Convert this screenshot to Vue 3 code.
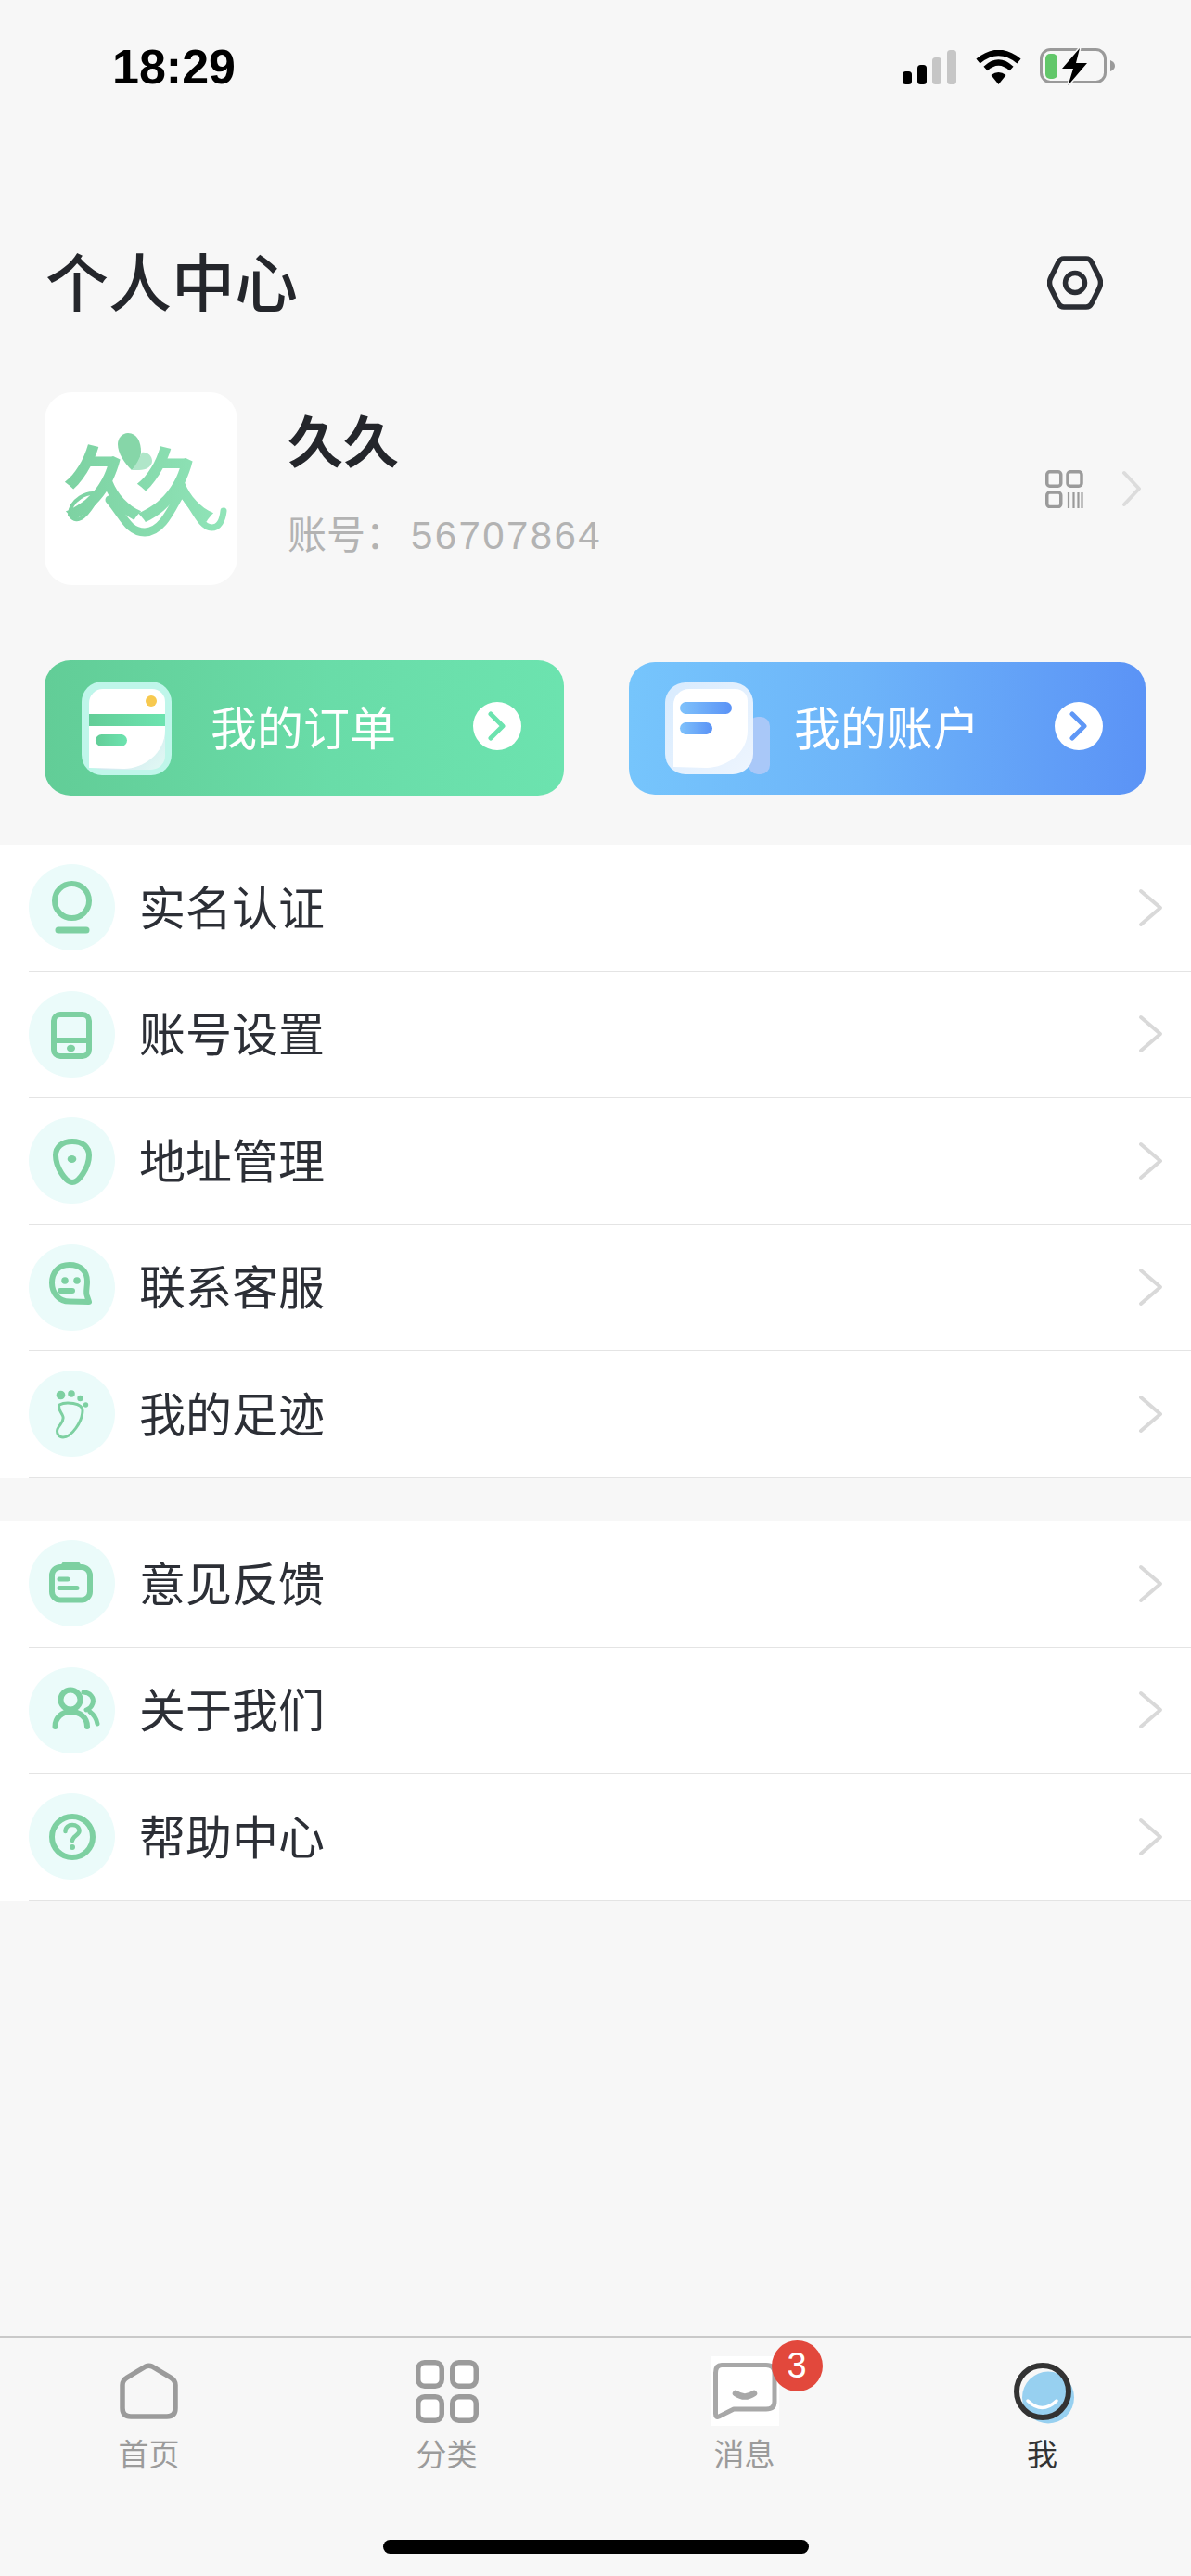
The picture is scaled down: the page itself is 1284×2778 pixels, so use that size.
<template>
  <div class="page">
    <!-- status bar -->
    <div class="status">
      <span class="time">18:29</span>
      <div class="status-icons">
        <svg width="59" height="37" viewBox="0 0 59 37">
          <rect x="0" y="23" width="10" height="14" rx="3.5" fill="#000" />
          <rect x="16" y="16" width="10" height="21" rx="3.5" fill="#000" />
          <rect x="32" y="8" width="10" height="29" rx="3.5" fill="#c6c6c6" />
          <rect x="48" y="0" width="10" height="37" rx="3.5" fill="#c6c6c6" />
        </svg>
        <svg width="51" height="37" viewBox="0 0 51 37">
          <path d="M3.5 12Q25.5 -6 47.5 12" fill="none" stroke="#000" stroke-width="6.5" />
          <path d="M11.5 20Q25.5 7 39.5 20" fill="none" stroke="#000" stroke-width="6" />
          <path d="M17.5 27Q25.5 21 33.5 27L25.5 37Z" fill="#000" />
        </svg>
        <svg width="81" height="41" viewBox="0 0 81 41">
          <rect x="1.5" y="1.5" width="69" height="35" rx="10" fill="none" stroke="#9a9a9a" stroke-width="3" />
          <rect x="6" y="6" width="13" height="27" rx="5" fill="#62c76a" />
          <path d="M76 13Q81 15 81 19Q81 23 76 25Z" fill="#9a9a9a" />
          <path d="M43 0L24 22H36L30.5 40L51 16H39Z" fill="#000" stroke="#f7f7f7" stroke-width="3" paint-order="stroke" />
        </svg>
      </div>
    </div>

    <div class="header">
      <h1 class="title">个人中心</h1>
      <svg class="settings" width="60" height="58" viewBox="0 0 60 58" fill="none" stroke="#2a2d33" stroke-width="5.5">
        <path d="M18 3H42Q46 3 48 7L56 23Q59 29 56 35L48 51Q46 55 42 55H18Q14 55 12 51L4 35Q1 29 4 23L12 7Q14 3 18 3Z" />
        <circle cx="30" cy="29" r="10.5" />
      </svg>
    </div>

    <div class="profile">
      <div class="avatar">
        <svg width="208" height="208" viewBox="0 0 208 208">
          <defs>
            <linearGradient id="logoGrad" gradientUnits="userSpaceOnUse" x1="25" y1="0" x2="193" y2="0">
              <stop offset="0" stop-color="#7dd2a2" />
              <stop offset="1" stop-color="#90e4b8" />
            </linearGradient>
          </defs>
          <text x="20" y="130" class="logo-text" fill="url(#logoGrad)">久</text>
          <text x="98" y="132" class="logo-text" fill="url(#logoGrad)">久</text>
          <path d="M70 116C84 132 90 151 108 151C126 151 136 128 146 110" fill="none" stroke="url(#logoGrad)" stroke-width="9" stroke-linecap="round" />
          <path d="M58 110C46 106 28 116 27 132C36 146 48 130 58 112" fill="none" stroke="url(#logoGrad)" stroke-width="4" />
          <path d="M150 112C160 122 168 146 180 146C188 146 192 138 193 128" fill="none" stroke="url(#logoGrad)" stroke-width="7" stroke-linecap="round" />
          <path d="M90 44C100 44 104 54 104 64C104 72 99 80 94 84C86 76 79 66 79 56C79 49 84 44 90 44Z" fill="#86d6a8" />
          <path d="M105 65C111 64 116 69 116 74C116 80 110 84 102 84H94C99 78 102 72 105 65Z" fill="#b0e6c9" />
        </svg>
      </div>
      <div class="info">
        <div class="name">久久</div>
        <div class="account"><span>账号：</span><span class="account-no">56707864</span></div>
      </div>
      <div class="profile-right">
        <svg width="41" height="41" viewBox="0 0 41 41" fill="none" stroke="#9b9b9b" stroke-width="3.5">
          <rect x="1.75" y="1.75" width="15" height="15.5" rx="3" />
          <rect x="24" y="1.75" width="15" height="15.5" rx="3" />
          <rect x="1.75" y="24" width="15" height="15.5" rx="3" />
          <path d="M25 24V41M30.5 24V41M35.5 24V41M39.5 24V41" stroke-width="2.2" />
        </svg>
        <svg width="22" height="40" viewBox="0 0 22 40" fill="none" stroke="#dcdcdc" stroke-width="4" stroke-linecap="round" stroke-linejoin="round">
          <path d="M3 3L19 20L3 37" />
        </svg>
      </div>
    </div>

    <div class="cards">
      <div class="card card-green">
        <svg class="card-icon" width="97" height="101" viewBox="0 0 97 101">
          <defs>
            <linearGradient id="curlGreen" x1="0" y1="0" x2="1" y2="1">
              <stop offset="0.5" stop-color="#cde6ee" />
              <stop offset="1" stop-color="#e2f9f4" />
            </linearGradient>
            <linearGradient id="bandGreen" x1="0" y1="0" x2="1" y2="0">
              <stop offset="0" stop-color="#62cd97" />
              <stop offset="1" stop-color="#6ce3af" />
            </linearGradient>
          </defs>
          <rect width="97" height="101" rx="22" fill="#bff6ea" />
          <rect x="8" y="8" width="82" height="87" rx="15" fill="url(#curlGreen)" />
          <path d="M8 23A15 15 0 0 1 23 8H76A14 14 0 0 1 90 22V52C90 78 66 94 46 94L8 93Z" fill="#fff" />
          <rect x="8" y="35" width="82" height="13" fill="url(#bandGreen)" />
          <rect x="15" y="57" width="34" height="13" rx="6.5" fill="url(#bandGreen)" />
          <circle cx="75" cy="21" r="6" fill="#f7c94f" />
        </svg>
        <span class="card-text card-text-green">我的订单</span>
        <span class="card-arrow card-arrow-green">
          <svg width="22" height="32" viewBox="0 0 22 32" fill="none" stroke="#6ce3af" stroke-width="5" stroke-linecap="round" stroke-linejoin="round">
            <path d="M4 3L17 16L4 29" />
          </svg>
        </span>
      </div>

      <div class="card card-blue">
        <svg class="card-icon" width="113" height="99" viewBox="0 0 113 99">
          <defs>
            <linearGradient id="edgeBlue" x1="0" y1="0" x2="1" y2="1">
              <stop offset="0" stop-color="#d8ebfe" />
              <stop offset="1" stop-color="#eef5fe" />
            </linearGradient>
            <linearGradient id="curlBlue" x1="0" y1="0" x2="1" y2="1">
              <stop offset="0.55" stop-color="#d5e4fb" />
              <stop offset="1" stop-color="#f0f6fe" />
            </linearGradient>
            <linearGradient id="barBlue" x1="0" y1="0" x2="1" y2="0">
              <stop offset="0" stop-color="#7fc2fb" />
              <stop offset="1" stop-color="#5a92f6" />
            </linearGradient>
          </defs>
          <rect x="90" y="37" width="23" height="62" rx="10" fill="#a9c8f8" />
          <rect width="95" height="99" rx="22" fill="url(#edgeBlue)" />
          <path d="M9 24A17 17 0 0 1 26 7H76A13 13 0 0 1 89 20V52C89 76 66 92 44 92L9 91Z" fill="#fff" />
          <rect x="16" y="21" width="56" height="13" rx="6.5" fill="url(#barBlue)" />
          <rect x="16" y="43" width="35" height="13" rx="6.5" fill="url(#barBlue)" />
        </svg>
        <span class="card-text card-text-blue">我的账户</span>
        <span class="card-arrow card-arrow-blue">
          <svg width="22" height="32" viewBox="0 0 22 32" fill="none" stroke="#5f97f6" stroke-width="5" stroke-linecap="round" stroke-linejoin="round">
            <path d="M4 3L17 16L4 29" />
          </svg>
        </span>
      </div>
    </div>

    <div v-for="(group, gIndex) in menuGroups" :key="gIndex" class="menu" :class="{ 'menu-second': gIndex === 1 }">
      <div v-for="item in group" :key="item.label" class="row">
        <span class="row-circle">
          <svg width="93" height="93" viewBox="0 0 93 93" fill="none" stroke="#7dd0a1" stroke-width="6" stroke-linecap="round" stroke-linejoin="round">
            <template v-if="item.icon === 'id'">
              <circle cx="46.5" cy="39.5" r="18.5" />
              <path d="M32 71H62" stroke-width="7" />
            </template>
            <template v-else-if="item.icon === 'phone'">
              <rect x="27" y="25" width="38" height="45" rx="7" />
              <path d="M27 53H65" />
              <ellipse cx="45.5" cy="61.5" rx="4.5" ry="3.8" fill="#7dd0a1" stroke="none" />
            </template>
            <template v-else-if="item.icon === 'pin'">
              <path d="M47 26C58 26 65 32 65 41C65 54 54 70 47 70C40 70 29 54 29 41C29 32 36 26 47 26Z" />
              <ellipse cx="46.5" cy="45" rx="4.8" ry="4" fill="#7dd0a1" stroke="none" />
            </template>
            <template v-else-if="item.icon === 'service'">
              <path d="M44 22C56 22 63 29 63 40C63 47 61 52 63 56L65 62L44 61.5C32 61.5 25 52 25 41.5C25 30 32 22 44 22Z" />
              <circle cx="39" cy="39" r="3.8" fill="#7dd0a1" stroke="none" />
              <circle cx="52" cy="39" r="3.8" fill="#7dd0a1" stroke="none" />
              <path d="M34 50H47" />
            </template>
            <template v-else-if="item.icon === 'foot'">
              <path d="M33 37C40 33 58 35 58 43C58 55 46 72 37 72C32 72 29.5 67 31 63C33 58 38 56 37 50C36 46 31 42 33 37Z" stroke-width="3" />
              <circle cx="34.5" cy="26.5" r="4.8" fill="#7dd0a1" stroke="none" />
              <circle cx="46" cy="25" r="3.8" fill="#7dd0a1" stroke="none" />
              <circle cx="55.5" cy="30" r="3.2" fill="#7dd0a1" stroke="none" />
              <circle cx="61.5" cy="37" r="2.7" fill="#7dd0a1" stroke="none" />
            </template>
            <template v-else-if="item.icon === 'note'">
              <rect x="25" y="29" width="41" height="35.5" rx="9" />
              <rect x="37.5" y="25.5" width="16" height="4" rx="2" fill="#ebfbfa" stroke-width="5" />
              <path d="M33 42H42M33 51.5H52" stroke-width="5" />
            </template>
            <template v-else-if="item.icon === 'users'">
              <circle cx="45" cy="35" r="10.5" />
              <path d="M28.5 64C28.5 54 36 48 45.5 48C55 48 63 54 63 64" />
              <path d="M59 27C66 27 71 33 69 39C68 42 65 45 62 46" stroke-width="5" />
              <path d="M66 48C70 51 73 55 74 61" stroke-width="5" />
            </template>
            <template v-else>
              <circle cx="47" cy="47" r="22" />
              <path d="M39.5 41C39.5 36 43 34 47 34C51 34 54.5 36.5 54.5 40.5C54.5 45 47 46 47 51" stroke-width="4.5" />
              <circle cx="47" cy="58" r="3" fill="#7dd0a1" stroke="none" />
            </template>
          </svg>
        </span>
        <span class="row-label">{{ item.label }}</span>
        <svg class="row-arrow" width="27" height="42" viewBox="0 0 27 42" fill="none" stroke="#d9d9d9" stroke-width="4" stroke-linecap="round" stroke-linejoin="round">
          <path d="M3 3L24 21L3 39" />
        </svg>
      </div>
    </div>

    <!-- bottom tabs -->
    <div class="tabbar">
      <div class="tabs">
        <div class="tab">
          <div class="tab-icon">
            <svg width="63" height="61" viewBox="0 0 63 61" fill="none" stroke="#9b9b9b" stroke-width="5.5" stroke-linejoin="round">
              <path d="M28 4Q31.5 2.5 35 4L55 16Q60 19 60 24V49Q60 58 51 58H12Q3 58 3 49V24Q3 19 8 16Z" />
            </svg>
          </div>
          <span class="tab-label">首页</span>
        </div>
        <div class="tab">
          <div class="tab-icon">
            <svg width="68" height="68" viewBox="0 0 68 68" fill="#fff" stroke="#9b9b9b" stroke-width="5.5">
              <rect x="2.75" y="2.75" width="25.5" height="25.5" rx="7" />
              <rect x="39.75" y="2.75" width="25.5" height="25.5" rx="7" />
              <rect x="2.75" y="39.75" width="25.5" height="25.5" rx="7" />
              <rect x="39.75" y="39.75" width="25.5" height="25.5" rx="7" />
            </svg>
          </div>
          <span class="tab-label">分类</span>
        </div>
        <div class="tab">
          <div class="tab-icon tab-icon-msg">
            <svg width="74" height="75" viewBox="0 0 74 75">
              <path d="M12 9.5H60Q69 9.5 69 18V49Q69 57 60 57H25L9 65Q5.5 66.5 5.5 62V18Q5.5 9.5 12 9.5Z" fill="none" stroke="#a8a8a8" stroke-width="5" stroke-linejoin="round" />
              <path d="M27 40Q37 47 47 40" fill="none" stroke="#a8a8a8" stroke-width="6.5" stroke-linecap="round" />
            </svg>
            <span class="badge">3</span>
          </div>
          <span class="tab-label">消息</span>
        </div>
        <div class="tab">
          <div class="tab-icon">
            <svg class="me-icon" width="62" height="62" viewBox="0 0 62 62">
              <circle cx="37" cy="37.5" r="28" fill="#97d0f0" />
              <circle cx="31" cy="31" r="28" fill="none" stroke="#333" stroke-width="6" />
              <path d="M15 41Q30.5 56 46 41" fill="none" stroke="#fff" stroke-width="3.5" stroke-linecap="round" />
            </svg>
          </div>
          <span class="tab-label tab-label-active">我</span>
        </div>
      </div>
      <div class="home-bar"></div>
    </div>
  </div>
</template>

<script setup>
import { ref } from 'vue';

const menuGroups = ref([
  [
    { label: '实名认证', icon: 'id' },
    { label: '账号设置', icon: 'phone' },
    { label: '地址管理', icon: 'pin' },
    { label: '联系客服', icon: 'service' },
    { label: '我的足迹', icon: 'foot' },
  ],
  [
    { label: '意见反馈', icon: 'note' },
    { label: '关于我们', icon: 'users' },
    { label: '帮助中心', icon: 'help' },
  ],
]);
</script>

<style>
body {
  background: #f7f7f7;
}
</style>

<style scoped>
.page {
  width: 1284px;
  min-height: 2778px;
  display: flex;
  flex-direction: column;
  background: #f7f7f7;
  font-family: "Noto Sans CJK SC", "Liberation Sans", sans-serif;
  color: #2a2d33;
  overflow: hidden;
}

.status {
  height: 145px;
  box-sizing: border-box;
  padding: 52px 82px 0 121px;
  display: flex;
  justify-content: space-between;
  align-items: flex-start;
}

.time {
  font-family: "Liberation Sans", sans-serif;
  font-weight: 700;
  font-size: 52px;
  line-height: 40px;
  color: #000;
}

.status-icons {
  display: flex;
  align-items: center;
  gap: 19px;
  height: 41px;
}

.header {
  margin-top: 110px;
  height: 100px;
  padding: 0 95px 0 49px;
  display: flex;
  justify-content: space-between;
  align-items: center;
}

.title {
  margin: 0 0 6px;
  font-size: 68px;
  line-height: 94px;
  font-weight: 500;
  color: #24262b;
}

.profile {
  margin-top: 68px;
  padding: 0 53px 0 48px;
  display: flex;
  align-items: center;
}

.avatar {
  width: 208px;
  height: 208px;
  border-radius: 30px;
  background: #fff;
  flex-shrink: 0;
}

.avatar svg {
  display: block;
}

.logo-text {
  font-family: "Noto Sans CJK SC", sans-serif;
  font-size: 86px;
  font-weight: 700;
}

.info {
  margin-left: 54px;
  height: 208px;
  box-sizing: border-box;
  padding-top: 8px;
}

.name {
  font-size: 60px;
  line-height: 84px;
  font-weight: 700;
  color: #24262b;
}

.account {
  margin-top: 29px;
  font-size: 42px;
  line-height: 60px;
  color: #b3b3b3;
  display: flex;
}

.account-no {
  font-family: "Liberation Sans", sans-serif;
  letter-spacing: 2.4px;
  margin-left: 7px;
  padding-top: 4px;
}

.profile-right {
  margin-left: auto;
  display: flex;
  align-items: center;
  gap: 41px;
}

.cards {
  margin-top: 81px;
  height: 146px;
  padding-left: 48px;
  display: flex;
  align-items: center;
}

.card {
  display: flex;
  align-items: center;
  border-radius: 28px;
}

.card-green {
  width: 560px;
  height: 146px;
  background: linear-gradient(90deg, #62cd97 0%, #69dca8 55%, #6ce3af 100%);
}

.card-blue {
  width: 557px;
  height: 143px;
  margin-left: 70px;
  background: linear-gradient(90deg, #76c5fc 0%, #6db4f9 45%, #5b93f6 100%);
}

.card-green .card-icon {
  margin-left: 40px;
}

.card-blue .card-icon {
  margin-left: 39px;
}

.card-text {
  margin-bottom: 7px;
  font-size: 50px;
  line-height: 70px;
  color: #fff;
}

.card-text-green {
  margin-left: 42px;
}

.card-text-blue {
  margin-left: 26px;
}

.card-arrow {
  width: 52px;
  height: 52px;
  margin-bottom: 4px;
  border-radius: 50%;
  background: #fff;
  display: flex;
  align-items: center;
  justify-content: center;
}

.card-arrow-green {
  margin-left: 83px;
}

.card-arrow-blue {
  margin-left: 81px;
}

.menu {
  margin-top: 53px;
  background: #fff;
}

.menu-second {
  margin-top: 46.5px;
}

.row {
  height: 136.5px;
  box-sizing: border-box;
  margin-left: 31px;
  padding-right: 30px;
  display: flex;
  align-items: center;
  border-bottom: 1.5px solid #e4e4e4;
}

.row-circle {
  width: 93px;
  height: 93px;
  border-radius: 50%;
  background: #ebfbfa;
  flex-shrink: 0;
}

.row-circle svg {
  display: block;
}

.row-label {
  margin: 0 0 6px 26px;
  font-size: 50px;
  line-height: 70px;
  color: #2c2f36;
}

.row-arrow {
  margin-left: auto;
}

.tabbar {
  margin-top: auto;
  border-top: 2px solid #c9c9c9;
  padding-top: 20px;
  display: flex;
  flex-direction: column;
  align-items: center;
}

.tabs {
  width: 100%;
  display: grid;
  grid-template-columns: repeat(4, 1fr);
}

.tab {
  display: flex;
  flex-direction: column;
  align-items: center;
}

.tab-icon {
  height: 75px;
  display: flex;
  align-items: center;
  justify-content: center;
}

.tab-icon-msg {
  position: relative;
  width: 74px;
  background: #fff;
}

.badge {
  position: absolute;
  left: 66px;
  top: -17px;
  width: 55px;
  height: 55px;
  border-radius: 50%;
  background: #e2483c;
  color: #fff;
  font-family: "Liberation Sans", sans-serif;
  font-size: 38px;
  line-height: 55px;
  text-align: center;
}

.me-icon {
  overflow: visible;
}

.tab-label {
  margin-top: 7px;
  font-size: 33px;
  line-height: 44px;
  color: #9b9b9b;
}

.tab-label-active {
  color: #333;
}

.home-bar {
  width: 459px;
  height: 15px;
  margin: 72px 0 24px;
  border-radius: 8px;
  background: #000;
}
</style>
